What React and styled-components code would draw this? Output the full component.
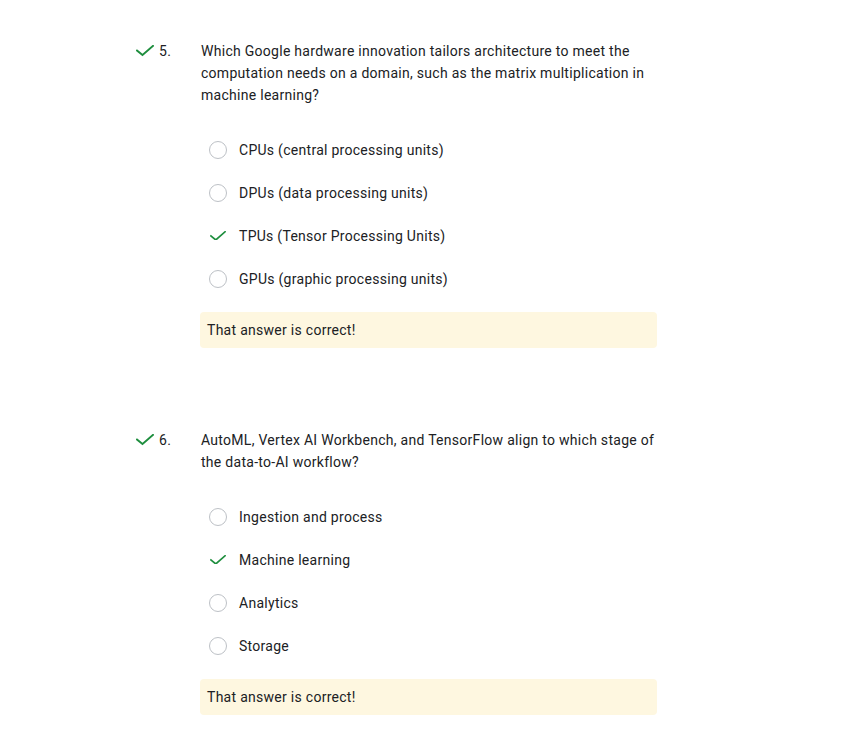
import React from "react";
import styled, { createGlobalStyle } from "styled-components";

const GlobalStyle = createGlobalStyle`
  body {
    margin: 0;
    background: #ffffff;
    font-family: Roboto, "Liberation Sans", Arial, sans-serif;
    color: #202124;
    letter-spacing: 0.28px;
  }
`;

const Page = styled.div`
  padding: 40px 0 0 134px;
  width: 523px;
`;

const Question = styled.section`
  margin-bottom: ${({ last }) => (last ? "0" : "81px")};
`;

const QuestionHead = styled.div`
  display: flex;
  align-items: flex-start;
  font-size: 14px;
  line-height: 22px;
`;

const StatusIcon = styled.div`
  width: 25px;
  height: 22px;
  padding-left: 2px;
  box-sizing: border-box;
  display: flex;
  align-items: center;
`;

const Number = styled.div`
  width: 42px;
  flex-shrink: 0;
`;

const Prompt = styled.div`
  flex: 1;
`;

const Options = styled.div`
  margin: 22px 0 0 66px;
  display: flex;
  flex-direction: column;
`;

const Option = styled.div`
  height: 43px;
  display: flex;
  align-items: center;
  gap: 12px;
  padding-left: 9px;
  font-size: 14px;
`;

const Radio = styled.span`
  width: 18px;
  height: 18px;
  box-sizing: border-box;
  border: 1.5px solid #bdc1c6;
  border-radius: 50%;
  flex-shrink: 0;
`;

const CheckSlot = styled.span`
  width: 18px;
  height: 18px;
  display: flex;
  align-items: center;
  justify-content: center;
  flex-shrink: 0;
`;

const Feedback = styled.div`
  margin-top: 12px;
  height: 36px;
  box-sizing: border-box;
  padding: 0 7px;
  display: flex;
  align-items: center;
  background: #fef7e0;
  border-radius: 4px;
  font-size: 14px;
  color: #202124;
`;

const Check = ({ w = 18 }) => (
  <svg width={w} height={w * 0.62} viewBox="0 0 18 11" fill="none">
    <polyline
      points="1,5.5 6.5,10 17,0.8"
      stroke="#1e8e3e"
      strokeWidth="1.9"
      strokeLinecap="square"
    />
  </svg>
);

const questions = [
  {
    n: "5.",
    text:
      "Which Google hardware innovation tailors architecture to meet the computation needs on a domain, such as the matrix multiplication in machine learning?",
    options: [
      "CPUs (central processing units)",
      "DPUs (data processing units)",
      "TPUs (Tensor Processing Units)",
      "GPUs (graphic processing units)",
    ],
    answer: 2,
  },
  {
    n: "6.",
    text:
      "AutoML, Vertex AI Workbench, and TensorFlow align to which stage of the data-to-AI workflow?",
    options: ["Ingestion and process", "Machine learning", "Analytics", "Storage"],
    answer: 1,
  },
];

const App = () => {
  return (
    <>
      <GlobalStyle />
      <Page>
        {questions.map((q, qi) => (
          <Question key={q.n} last={qi === questions.length - 1}>
            <QuestionHead>
              <StatusIcon>
                <Check w={18} />
              </StatusIcon>
              <Number>{q.n}</Number>
              <Prompt>{q.text}</Prompt>
            </QuestionHead>
            <Options>
              {q.options.map((opt, i) => (
                <Option key={opt}>
                  {i === q.answer ? (
                    <CheckSlot>
                      <Check w={16} />
                    </CheckSlot>
                  ) : (
                    <Radio />
                  )}
                  {opt}
                </Option>
              ))}
              <Feedback>That answer is correct!</Feedback>
            </Options>
          </Question>
        ))}
      </Page>
    </>
  );
};

export default App;
